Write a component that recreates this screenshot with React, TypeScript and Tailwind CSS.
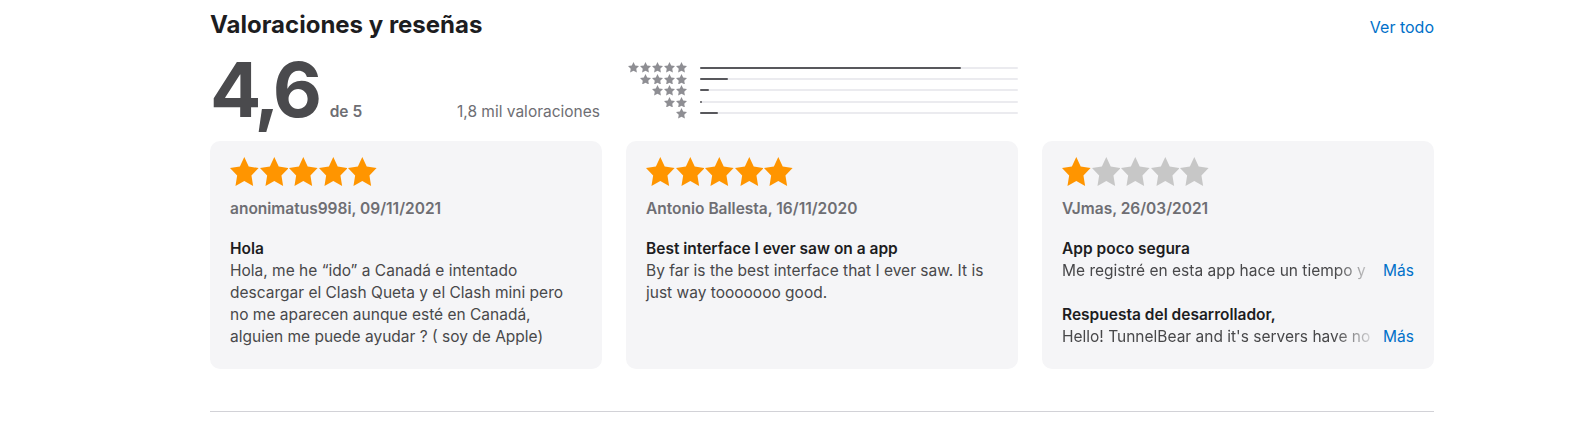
import React from "react";

const Star = ({ className }: { className: string }) => (
  <svg
    viewBox="2 2 20 19.1"
    preserveAspectRatio="none"
    className={className}
    aria-hidden="true"
  >
    <path
      d="M12 2l3.09 6.26L22 9.27l-5 4.87 1.18 6.88L12 17.77l-6.18 3.25L7 14.14 2 9.27l6.91-1.01L12 2z"
      fill="currentColor"
    />
  </svg>
);

const hist = [
  { n: 5, w: 82 },
  { n: 4, w: 8.8 },
  { n: 3, w: 2.8 },
  { n: 2, w: 0.7 },
  { n: 1, w: 5.7 },
];

const Stars = ({ filled }: { filled: number }) => (
  <div className="flex gap-[1px]">
    {[0, 1, 2, 3, 4].map((i) => (
      <Star
        key={i}
        className={
          i < filled
            ? "w-[28.6px] h-[29px] text-[#ff9500]"
            : "w-[28.6px] h-[29px] text-[#c7c7c7]"
        }
      />
    ))}
  </div>
);

const Fade = ({ text }: { text: string }) => (
  <div className="flex items-baseline gap-[4px]">
    <span className="flex-1 min-w-0 overflow-hidden whitespace-nowrap [mask-image:linear-gradient(90deg,#000_86%,transparent)]">
      {text}
    </span>
    <a className="text-[#0070c9] shrink-0">Más</a>
  </div>
);

export default function App() {
  return (
    <div className="bg-white min-h-screen font-[family-name:Inter,'Liberation_Sans',sans-serif] pl-[210px] pt-[10px]">
      <div className="w-[1224px]">
        <div className="flex items-baseline justify-between">
          <h2 className="text-[24px] leading-[29px] font-bold text-[#1d1d1f]">
            Valoraciones y reseñas
          </h2>
          <a className="text-[16px] text-[#0070c9]">Ver todo</a>
        </div>

        <div className="grid grid-cols-3 gap-6 mt-[12px]">
          <div className="flex items-baseline justify-between">
            <div className="flex items-baseline">
              <span className="text-[76px] leading-[76px] font-bold text-[#4a4a4d] tracking-[-0.06em]">
                4,6
              </span>
              <span className="ml-[12px] text-[15.5px] font-semibold text-[#6e6e73]">
                de 5
              </span>
            </div>
            <span className="text-[15.5px] text-[#6e6e73] mr-[2px]">
              1,8 mil valoraciones
            </span>
          </div>

          <div className="flex flex-col pt-[11px]">
            {hist.map((r) => (
              <div key={r.n} className="flex items-center h-[11.4px]">
                <div className="flex justify-end gap-[1px] w-[61px] text-[#8e8e93]">
                  {Array.from({ length: r.n }).map((_, i) => (
                    <Star key={i} className="w-[11px] h-[10.6px]" />
                  ))}
                </div>
                <div className="ml-[13px] flex-1 h-[2px] bg-[#ebebef] rounded-full">
                  <div
                    className="h-full bg-[#58585c] rounded-full"
                    style={{ width: `${r.w}%` }}
                  />
                </div>
              </div>
            ))}
          </div>
          <div />
        </div>

        <div className="grid grid-cols-3 gap-6 mt-[14px] text-[15.5px] leading-[22px]">
          <div className="bg-[#f5f5f7] rounded-[10px] px-5 pt-4 pb-[21px]">
            <Stars filled={5} />
            <div className="mt-[13px] leading-[20px] font-semibold text-[#6e6e73]">
              anonimatus998i, 09/11/2021
            </div>
            <div className="mt-[19px] font-semibold text-[#1d1d1f]">Hola</div>
            <p className="text-[#48484a]">
              Hola, me he “ido” a Canadá e intentado descargar el Clash Queta y el
              Clash mini pero no me aparecen aunque esté en Canadá, alguien me
              puede ayudar ? ( soy de Apple)
            </p>
          </div>

          <div className="bg-[#f5f5f7] rounded-[10px] px-5 pt-4 pb-[21px]">
            <Stars filled={5} />
            <div className="mt-[13px] leading-[20px] font-semibold text-[#6e6e73]">
              Antonio Ballesta, 16/11/2020
            </div>
            <div className="mt-[19px] font-semibold text-[#1d1d1f]">
              Best interface I ever saw on a app
            </div>
            <p className="text-[#48484a]">
              By far is the best interface that I ever saw. It is just way tooooooo
              good.
            </p>
          </div>

          <div className="bg-[#f5f5f7] rounded-[10px] px-5 pt-4 pb-[21px]">
            <Stars filled={1} />
            <div className="mt-[13px] leading-[20px] font-semibold text-[#6e6e73]">
              VJmas, 26/03/2021
            </div>
            <div className="mt-[19px] font-semibold text-[#1d1d1f]">
              App poco segura
            </div>
            <div className="text-[#48484a]">
              <Fade text="Me registré en esta app hace un tiempo y" />
            </div>
            <div className="mt-[22px] font-semibold text-[#1d1d1f]">
              Respuesta del desarrollador,
            </div>
            <div className="text-[#48484a]">
              <Fade text="Hello! TunnelBear and it's servers have no" />
            </div>
          </div>
        </div>

        <div className="mt-[42px] h-px bg-[#d2d2d7]" />
      </div>
    </div>
  );
}
